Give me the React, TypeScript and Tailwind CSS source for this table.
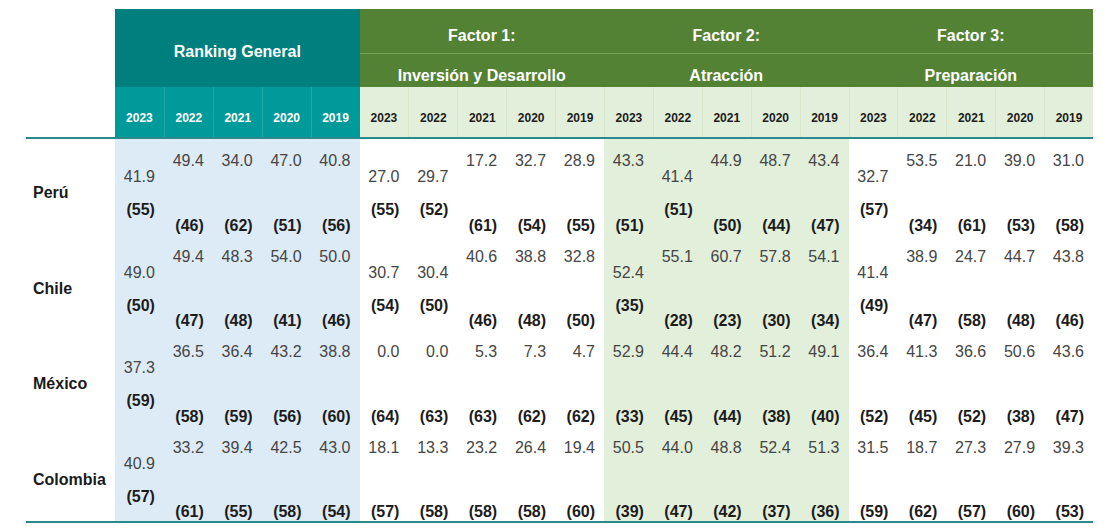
type Cell = [string, string, boolean?]

type Row = { country: string; cells: Cell[] }

const rows: Row[] = [
  {
    country: "Perú",
    cells: [
      ["41.9", "55", true], ["49.4", "46"], ["34.0", "62"], ["47.0", "51"], ["40.8", "56"],
      ["27.0", "55", true], ["29.7", "52", true], ["17.2", "61"], ["32.7", "54"], ["28.9", "55"],
      ["43.3", "51"], ["41.4", "51", true], ["44.9", "50"], ["48.7", "44"], ["43.4", "47"],
      ["32.7", "57", true], ["53.5", "34"], ["21.0", "61"], ["39.0", "53"], ["31.0", "58"],
    ],
  },
  {
    country: "Chile",
    cells: [
      ["49.0", "50", true], ["49.4", "47"], ["48.3", "48"], ["54.0", "41"], ["50.0", "46"],
      ["30.7", "54", true], ["30.4", "50", true], ["40.6", "46"], ["38.8", "48"], ["32.8", "50"],
      ["52.4", "35", true], ["55.1", "28"], ["60.7", "23"], ["57.8", "30"], ["54.1", "34"],
      ["41.4", "49", true], ["38.9", "47"], ["24.7", "58"], ["44.7", "48"], ["43.8", "46"],
    ],
  },
  {
    country: "México",
    cells: [
      ["37.3", "59", true], ["36.5", "58"], ["36.4", "59"], ["43.2", "56"], ["38.8", "60"],
      ["0.0", "64"], ["0.0", "63"], ["5.3", "63"], ["7.3", "62"], ["4.7", "62"],
      ["52.9", "33"], ["44.4", "45"], ["48.2", "44"], ["51.2", "38"], ["49.1", "40"],
      ["36.4", "52"], ["41.3", "45"], ["36.6", "52"], ["50.6", "38"], ["43.6", "47"],
    ],
  },
  {
    country: "Colombia",
    cells: [
      ["40.9", "57", true], ["33.2", "61"], ["39.4", "55"], ["42.5", "58"], ["43.0", "54"],
      ["18.1", "57"], ["13.3", "58"], ["23.2", "58"], ["26.4", "58"], ["19.4", "60"],
      ["50.5", "39"], ["44.0", "47"], ["48.8", "42"], ["52.4", "37"], ["51.3", "36"],
      ["31.5", "59"], ["18.7", "62"], ["27.3", "57"], ["27.9", "60"], ["39.3", "53"],
    ],
  },
]

const years = ["2023", "2022", "2021", "2020", "2019"]

const factors = [
  { title: "Factor 1:", sub: "Inversión y Desarrollo" },
  { title: "Factor 2:", sub: "Atracción" },
  { title: "Factor 3:", sub: "Preparación" },
]

const grid = "grid grid-cols-[89px_repeat(20,minmax(0,1fr))] w-[1067px]"

function groupBg(i: number) {
  const g = Math.floor(i / 5)
  if (g === 0) return "bg-[#ddebf7]"
  if (g === 2) return "bg-[#e2efda]"
  return "bg-white"
}

function DataCell({ cell, idx }: { cell: Cell; idx: number }) {
  const [value, rank, mid] = cell
  return (
    <div
      className={`${groupBg(idx)} flex flex-col items-end pr-[9px] leading-[18px] ${
        mid ? "pt-[29px]" : "pt-[13px] justify-between"
      }`}
    >
      <span className="text-[#454545]">{value}</span>
      <span className={`font-bold text-[#1c1c1c] ${mid ? "mt-[15px]" : ""}`}>({rank})</span>
    </div>
  )
}

export default function App() {
  return (
    <div className="bg-white w-[1106px] h-[531px] pt-[9px] pl-[26px] font-['Liberation_Sans',Arial,sans-serif] text-[16px]">
      {/* header */}
      <div className={`${grid} grid-rows-[45px_33px_50px] border-b-2 border-[#2a8a8a] leading-[18px]`}>
        <div className="row-span-3" />
        <div className="col-span-5 row-span-2 bg-[#007f7f] flex items-center justify-center pt-[8px] text-white font-bold">
          Ranking General
        </div>
        {factors.map((f) => (
          <div
            key={f.title}
            className="col-span-5 bg-[#548235] border-b border-[#77a35c] flex items-end justify-center pb-[8px] text-white font-bold"
          >
            {f.title}
          </div>
        ))}
        {factors.map((f) => (
          <div
            key={f.sub}
            className="col-span-5 bg-[#548235] flex items-end justify-center pb-[2px] text-white font-bold"
          >
            {f.sub}
          </div>
        ))}
        {years.map((y, i) => (
          <div
            key={"rg" + y}
            className={`bg-[#009a9a] flex items-center justify-center pt-[11px] text-[12px] font-bold text-white ${
              i > 0 ? "border-l border-[#22a7a7]" : ""
            }`}
          >
            {y}
          </div>
        ))}
        {factors.map((f) =>
          years.map((y, i) => (
            <div
              key={f.title + y}
              className={`bg-[#e2efda] flex items-center justify-center pt-[11px] text-[12px] font-bold text-[#1c1c1c] ${
                i > 0 || f.title !== "Factor 1:" ? "border-l border-[#d8e8cd]" : ""
              }`}
            >
              {y}
            </div>
          ))
        )}
      </div>

      {/* body */}
      <div className={`${grid} auto-rows-[95.5px] border-b-2 border-[#2a8a8a]`}>
        {rows.map((r) => (
          <div key={r.country} className="contents">
            <div className="pl-[7px] pt-[45px] leading-[18px] font-bold text-[#1a1a1a]">{r.country}</div>
            {r.cells.map((c, i) => (
              <DataCell key={i} cell={c} idx={i} />
            ))}
          </div>
        ))}
      </div>
    </div>
  )
}
